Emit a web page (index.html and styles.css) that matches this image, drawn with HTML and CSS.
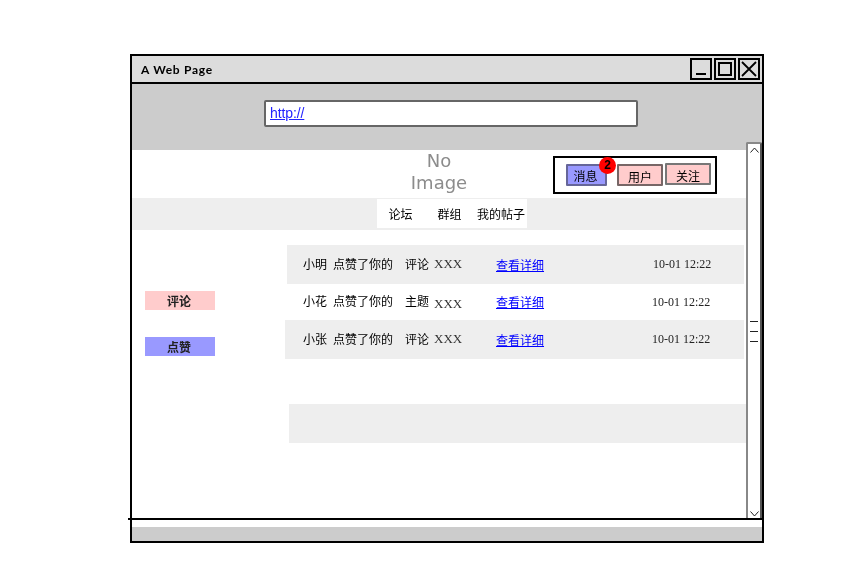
FILE: index.html
```html
<!DOCTYPE html>
<html lang="zh">
<head>
<meta charset="utf-8">
<title>A Web Page</title>
<link rel="stylesheet" href="styles.css">
</head>
<body>
<div class="window">
  <header class="titlebar">
    <span class="title">A Web Page</span>
    <div class="win-controls">
      <span class="win-btn"><svg width="18" height="18" viewBox="0 0 18 18"><path d="M4 14H14" stroke="#000" stroke-width="2"/></svg></span>
      <span class="win-btn"><svg width="18" height="18" viewBox="0 0 18 18"><rect x="3" y="3" width="12" height="12" fill="none" stroke="#000" stroke-width="2"/></svg></span>
      <span class="win-btn"><svg width="18" height="18" viewBox="0 0 18 18"><path d="M2 2L16 16M16 2L2 16" stroke="#000" stroke-width="1.8"/></svg></span>
    </div>
  </header>
  <div class="toolbar">
    <div class="urlbox"><a class="url" href="#">http://</a></div>
  </div>
  <main class="page">
    <div class="head">
      <div class="logo">No<br>Image</div>
      <div class="actions">
        <button class="act act-blue">消息<span class="badge">2</span></button>
        <button class="act act-pink act-user">用户</button>
        <button class="act act-pink">关注</button>
      </div>
    </div>
    <nav class="nav">
      <span class="tab tab-a">论坛</span>
      <span class="tab tab-b">群组</span>
      <span class="tab tab-c">我的帖子</span>
    </nav>
    <div class="content">
      <aside class="side">
        <div class="tag tag-pink">评论</div>
        <div class="tag tag-blue">点赞</div>
      </aside>
      <div class="list">
        <div class="row row-grey row-a">
          <span class="who">小明</span><span class="what">点赞了你的</span><span class="kind">评论</span><span class="xxx">XXX</span><a class="more" href="#">查看详细</a><span class="time">10-01 12:22</span>
        </div>
        <div class="row row-b">
          <span class="who">小花</span><span class="what">点赞了你的</span><span class="kind">主题</span><span class="xxx">XXX</span><a class="more" href="#">查看详细</a><span class="time">10-01 12:22</span>
        </div>
        <div class="row row-grey row-c">
          <span class="who">小张</span><span class="what">点赞了你的</span><span class="kind">评论</span><span class="xxx">XXX</span><a class="more" href="#">查看详细</a><span class="time">10-01 12:22</span>
        </div>
        <div class="pager"></div>
      </div>
    </div>
  </main>
  <div class="rule"></div>
  <div class="gap"></div>
  <footer class="status"></footer>
  <div class="scrollbar">
    <svg class="sb-up" width="9" height="6" viewBox="0 0 9 6"><path d="M.5 5.5L4.5 1L8.5 5.5" fill="none" stroke="#222" stroke-width="1"/></svg>
    <div class="sb-grip"><i></i><i></i><i></i></div>
    <svg class="sb-down" width="9" height="6" viewBox="0 0 9 6"><path d="M.5 .5L4.5 5L8.5 .5" fill="none" stroke="#222" stroke-width="1"/></svg>
  </div>
</div>
</body>
</html>
```

FILE: styles.css
```css
* { box-sizing: border-box; }
html, body { margin: 0; padding: 0; background: #fff; }
body { width: 857px; height: 564px; overflow: hidden; font-family: "Noto Sans CJK SC", "Liberation Sans", sans-serif; color: #000; }
a { color: #00f; }

.window { position: relative; margin: 54px 0 0 130px; width: 634px; height: 489px; border: 2px solid #000; display: flex; flex-direction: column; will-change: transform; }

.titlebar { height: 28px; flex: none; background: #dcdcdc; border-bottom: 2px solid #000; display: flex; align-items: flex-start; justify-content: space-between; padding: 2px 2px 0 9px; }
.title { font-family: "Lato", sans-serif; font-weight: 700; font-size: 12px; letter-spacing: .7px; line-height: 24px; }
.win-controls { display: flex; gap: 2px; }
.win-btn { width: 22px; height: 22px; border: 2px solid #000; display: flex; align-items: center; justify-content: center; }
.win-btn svg { flex: none; }

.toolbar { height: 66px; flex: none; background: #ccc; padding: 16px 0 0 132px; }
.urlbox { width: 374px; height: 27px; background: #fff; border: 2px solid #666; border-radius: 2px; padding-left: 4px; font: 14px/22px "Liberation Sans", sans-serif; letter-spacing: -.1px; }
.url { color: #22f; }

.page { flex: none; height: 368px; display: flex; flex-direction: column; }
.head { height: 48px; flex: none; position: relative; }
.logo { position: absolute; left: 257px; top: 0; width: 100px; text-align: center; color: #8c8c8c; font: 18px/22px "DejaVu Sans", sans-serif; }
.actions { position: absolute; left: 421px; top: 6px; width: 164px; height: 38px; border: 2px solid #000; display: flex; align-items: flex-start; padding: 5px 0 0 11px; }
.act { position: relative; padding: 2px 0 0; font: 12px/18px "Noto Sans CJK SC", sans-serif; color: #000; border: 2px solid #777; border-radius: 1px; height: 22px; }
.act-blue { width: 41px; background: #99f; margin: 1px 10px 0 0; border-color: #669; padding: 1px 2px 0 0; }
.act-pink { width: 46px; background: #fcc; }
.act-user { margin: 1px 2px 0 0; border-color: #766; }
.badge { position: absolute; right: -11px; top: -9px; width: 17px; height: 17px; border-radius: 50%; background: #f00; font: 700 12px/17px "Liberation Sans", sans-serif; text-align: center; color: #000; }

.nav { height: 32px; flex: none; background: #eee; width: 615px; display: flex; padding: 1px 0 2px 245px; }
.tab { background: #fff; font-size: 12px; line-height: 29px; text-align: center; }
.tab-a { width: 49px; padding-right: 2px; }
.tab-b { width: 49px; padding-right: 2px; }
.tab-c { width: 52px; white-space: nowrap; }

.content { flex: 1; display: flex; }
.side { width: 153px; flex: none; padding: 61px 0 0 13px; }
.tag { width: 70px; height: 19px; font-size: 12px; font-weight: 700; line-height: 19px; text-align: center; color: #222; padding-right: 2px; }
.tag-pink { background: #fcc; margin-bottom: 27px; }
.tag-blue { background: #99f; }

.list { flex: 1; padding-top: 15px; width: 462px; }
.row { height: 39px; width: 457px; display: flex; align-items: center; font-size: 12px; white-space: nowrap; }
.row-grey { background: #eee; }
.row-a { margin-left: 2px; }
.row-b { height: 36px; }
.row-c { width: 459px; }
.who { margin: -2px 0 0 18px; width: 30px; }
.row-a .who { margin-left: 16px; }
.what { width: 72px; margin-top: -2px; }
.kind { width: 29px; margin-top: -2px; }
.row-b .who, .row-b .what, .row-b .kind { margin-top: -4px; }
.xxx { font: 13px/1 "Liberation Serif", serif; color: #333; width: 62px; margin-top: -2px; }
.row-b .xxx { margin-top: 2px; }
.more { width: 48px; margin-top: 0; }
.row-b .more { margin-top: -2px; }
.time { font: 12px/1 "Liberation Serif", serif; color: #222; margin: -2px 0 0 108px; }
.row-a .time { margin-left: 109px; }
.row-b .time { margin-top: 0; }
.pager { height: 39px; width: 458px; margin: 45px 0 0 4px; background: #eee; }

.rule { height: 2px; flex: none; background: #000; position: relative; }
.rule::before { content: ""; position: absolute; left: -4px; top: 0; width: 4px; height: 2px; background: #000; }
.gap { height: 7px; flex: none; }
.status { flex: 1; background: #ccc; }

.scrollbar { position: absolute; left: 614px; top: 86px; width: 16px; height: 376px; background: #fff; border: 2px solid #888; border-right-color: #555; border-bottom: 0; border-radius: 2px 2px 0 0; display: flex; flex-direction: column; align-items: center; padding-top: 3px; }
.sb-up, .sb-down { flex: none; }
.sb-grip { margin-top: 168px; display: flex; flex-direction: column; gap: 9px; }
.sb-grip i { display: block; width: 8px; height: 1px; background: #222; }
.sb-down { margin-top: 169px; }
```
